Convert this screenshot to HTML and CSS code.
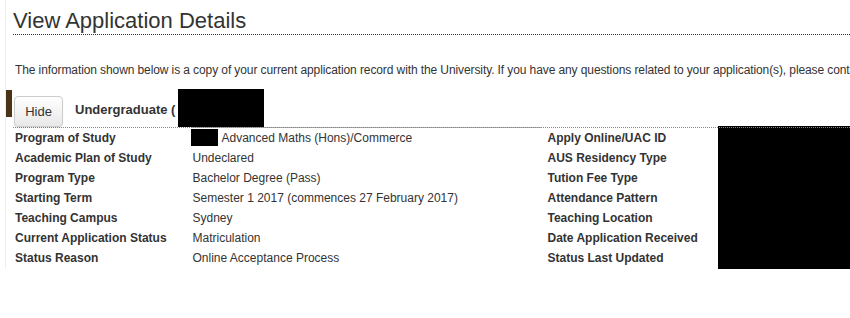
FILE: index.html
```html
<!DOCTYPE html>
<html lang="en">
<head>
  <meta charset="UTF-8">
  <meta name="viewport" content="width=device-width, initial-scale=1.0">
  <title>View Application Details</title>
  <link rel="stylesheet" href="styles.css">
</head>
<body>
  <div class="page">
    <h1 class="page-title">View Application Details</h1>
    <p class="intro">The information shown below is a copy of your current application record with the University. If you have any questions related to your application(s), please contact us.</p>

    <div class="career-head">
      <span class="tab-marker"></span>
      <button class="hide-btn">Hide</button>
      <strong class="career-name">Undergraduate (</strong>
      <span class="redact redact-career"></span>
    </div>

    <div class="details">
      <div class="col col-label">
        <div class="cell">Program of Study</div>
        <div class="cell">Academic Plan of Study</div>
        <div class="cell">Program Type</div>
        <div class="cell">Starting Term</div>
        <div class="cell">Teaching Campus</div>
        <div class="cell">Current Application Status</div>
        <div class="cell">Status Reason</div>
      </div>
      <div class="col col-value">
        <div class="cell"><span class="redact redact-code"></span>Advanced Maths (Hons)/Commerce</div>
        <div class="cell">Undeclared</div>
        <div class="cell">Bachelor Degree (Pass)</div>
        <div class="cell">Semester 1 2017 (commences 27 February 2017)</div>
        <div class="cell">Sydney</div>
        <div class="cell">Matriculation</div>
        <div class="cell">Online Acceptance Process</div>
      </div>
      <div class="col col-label col-label-right">
        <div class="cell">Apply Online/UAC ID</div>
        <div class="cell">AUS Residency Type</div>
        <div class="cell">Tution Fee Type</div>
        <div class="cell">Attendance Pattern</div>
        <div class="cell">Teaching Location</div>
        <div class="cell">Date Application Received</div>
        <div class="cell">Status Last Updated</div>
      </div>
      <div class="col col-redact">
        <span class="redact redact-side"></span>
      </div>
    </div>
  </div>
</body>
</html>
```

FILE: styles.css
```css
body {
  font-family: Arial, "Liberation Sans", sans-serif;
  color: #333;
  background-color: #fff;
  margin: 0;
  overflow: hidden;
}
.page {
  border-left: 1px solid #eee;
  margin-left: 5px;
  padding-left: 7px;
}
.page-title {
  font-size: 22px;
  font-weight: normal;
  line-height: 26px;
  margin: 0;
  padding-top: 8px;
  border-bottom: 1px dotted #333;
}
.intro {
  font-size: 12px;
  line-height: 14px;
  margin: 28px 0 0 2px;
  white-space: nowrap;
  letter-spacing: -0.1px;
  overflow: hidden;
}
.career-head {
  display: flex;
  align-items: center;
  margin-top: 12px;
  height: 38px;
  border-bottom: 1px dotted #888;
  position: relative;
}
.tab-marker {
  position: absolute;
  left: -7px;
  top: 1px;
  width: 6px;
  height: 27px;
  background: #4a3418;
}
.hide-btn {
  font-family: inherit;
  font-size: 13px;
  color: #333;
  width: 49px;
  height: 31px;
  margin: 6px 0 0 1px;
  background: linear-gradient(#fff, #e8e8e8);
  border: 1px solid #ccc;
  border-radius: 4px;
  box-shadow: 0 1px 1px rgba(0, 0, 0, 0.08);
}
.career-name {
  font-size: 13px;
  margin-left: 12px;
  margin-top: 2px;
}
.redact {
  display: inline-block;
  background: #000;
}
.redact-career {
  width: 86px;
  height: 38px;
  margin-left: 3px;
}
.details {
  display: flex;
  font-size: 12px;
}
.col {
  margin-top: -1px;
  border-top: 1px solid transparent;
}
.col-label {
  width: 176px;
  padding-left: 2px;
  font-weight: bold;
}
.col-value {
  width: 352px;
  border-top-color: #aaa;
}
.col-label-right {
  width: 171px;
  padding-left: 6px;
}
.col-redact {
  flex: 1;
}
.cell {
  height: 20px;
  line-height: 20px;
  white-space: nowrap;
}
.col-value .cell {
  padding-left: 2px;
}
.redact-code {
  width: 27px;
  height: 17px;
  vertical-align: middle;
  margin: -2px 4px 0 -2px;
}
.redact-side {
  display: block;
  width: 132px;
  height: 143px;
  margin-top: -2px;
}
```
